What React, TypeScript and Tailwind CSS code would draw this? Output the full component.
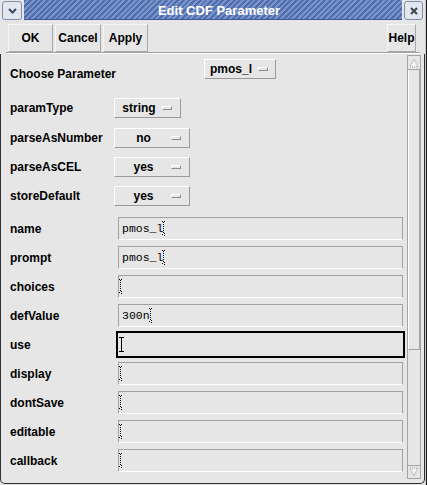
import React from 'react';

const sans = "font-['Liberation_Sans',Arial,sans-serif]";
const mono = "font-['Liberation_Mono','Courier_New',monospace]";
const labelCls = `${sans} font-bold text-[12px] leading-none text-black`;

const DotCursor = ({ after }: { after?: boolean }) => (
  <svg width="4" height="15" viewBox="0 0 4 15" className={`shrink-0 ${after ? 'ml-[-1px]' : 'ml-[-3px]'}`}>
    <g fill="#000">
      <rect x="0" y="0" width="1" height="1" />
      <rect x="2" y="0" width="1" height="1" />
      <rect x="1" y="1" width="1" height="1" />
      <rect x="1" y="3" width="1" height="1" />
      <rect x="1" y="5" width="1" height="1" />
      <rect x="1" y="7" width="1" height="1" />
      <rect x="1" y="9" width="1" height="1" />
      <rect x="1" y="11" width="1" height="1" />
      <rect x="2" y="12" width="1" height="1" />
      <rect x="0" y="13" width="1" height="1" />
      <rect x="2" y="14" width="1" height="1" />
    </g>
  </svg>
);

const SolidCursor = () => (
  <svg width="5" height="15" viewBox="0 0 5 15" className="shrink-0 ml-[-3px]">
    <path d="M0 0.5H5M2.5 0V15M0 14.5H5" stroke="#000" strokeWidth="1" />
  </svg>
);

const Dropdown = ({ text, w, pl = 7 }: { text: string; w: string; pl?: number }) => (
  <div
    className={`${w} h-[20px] flex items-center pr-[8px] bg-[#e6e6e6] border border-t-white border-l-white border-r-[#9a9a9a] border-b-[#9a9a9a] ${
      pl === 5 ? 'pl-[5px]' : 'pl-[7px]'
    }`}
  >
    <span className={`${labelCls} flex-1 text-center whitespace-nowrap`}>{text}</span>
    <span className="ml-[6px] w-[10px] h-[4px] shrink-0 border border-t-white border-l-white border-r-[#8c8c8c] border-b-[#8c8c8c]" />
  </div>
);

const Field = ({ value, focused }: { value?: string; focused?: boolean }) => (
  <div
    className={`w-[285px] h-[23px] flex items-center pl-[3px] border ${
      focused
        ? 'border-[#e6e6e6] outline-2 outline-black'
        : 'border-t-[#a2a2a2] border-l-[#a2a2a2] border-r-[#a2a2a2] border-b-white'
    }`}
  >
    {value ? <span className={`${mono} text-[11.5px] leading-none text-black whitespace-pre`}>{value}</span> : null}
    {focused ? <SolidCursor /> : <DotCursor after={!!value} />}
  </div>
);

const TopButton = ({ text, w }: { text: string; w: string }) => (
  <div
    className={`${w} h-[28px] flex items-center justify-center border border-t-[#f6f6f6] border-l-[#f6f6f6] border-r-[#a8a8a8] border-b-[#a8a8a8] ${labelCls}`}
  >
    {text}
  </div>
);

const dropRows = [
  { label: 'paramType', text: 'string', w: 'w-[67px]', mt: 'mt-[19px]' },
  { label: 'parseAsNumber', text: 'no', w: 'w-[76px]', mt: 'mt-[10px]' },
  { label: 'parseAsCEL', text: 'yes', w: 'w-[76px]', mt: 'mt-[9px]' },
  { label: 'storeDefault', text: 'yes', w: 'w-[76px]', mt: 'mt-[9px]' },
];

const fieldRows: { label: string; value?: string; focused?: boolean }[] = [
  { label: 'name', value: 'pmos_l' },
  { label: 'prompt', value: 'pmos_l' },
  { label: 'choices' },
  { label: 'defValue', value: '300n' },
  { label: 'use', focused: true },
  { label: 'display' },
  { label: 'dontSave' },
  { label: 'editable' },
  { label: 'callback' },
];

export default function App() {
  return (
    <div className="w-[427px] h-[485px] flex bg-[#1a1a1a] overflow-hidden">
      <div className="w-[425px] h-[485px] flex flex-col bg-[#e6e6e6]">
        {/* title bar */}
        <div className="h-[21px] flex items-start shrink-0">
          <div className="ml-[2px] mt-[1px] w-[20px] h-[19px] rounded-[3px] border border-[#7f8cab] bg-[#e2e6ee] flex items-center justify-center">
            <svg width="9" height="6" viewBox="0 0 9 6">
              <path d="M1 1L4.5 4.5L8 1" stroke="#3d4a68" strokeWidth="2" fill="none" />
            </svg>
          </div>
          <div className="ml-[2px] w-[378px] h-[20px] flex items-center justify-center pl-[12px] pt-[2px] border-b border-[#3c5796] bg-[repeating-linear-gradient(135deg,#4f6daf_0px,#4f6daf_2px,#7a94ca_2px,#7a94ca_4px)]">
            <span className={`${sans} font-bold text-[13px] leading-none text-white whitespace-nowrap`}>
              Edit CDF Parameter
            </span>
          </div>
          <div className="ml-[2px] mt-[1px] w-[19px] h-[19px] rounded-[3px] border border-[#7f8cab] bg-[#e2e6ee] flex items-center justify-center">
            <svg width="8" height="8" viewBox="0 0 8 8">
              <path d="M1 1L7 7M7 1L1 7" stroke="#3d4350" strokeWidth="2" />
            </svg>
          </div>
        </div>

        {/* buttons */}
        <div className="mt-[3px] h-[28px] flex pl-[8px] pr-[9px] gap-[2px] shrink-0">
          <TopButton text="OK" w="w-[45px]" />
          <TopButton text="Cancel" w="w-[46px]" />
          <TopButton text="Apply" w="w-[45px]" />
          <div className="ml-auto">
            <TopButton text="Help" w="w-[29px]" />
          </div>
        </div>
        <div className="ml-[6px] w-[414px] h-[2px] border-t border-t-[#a0a0a0] border-b border-b-white shrink-0" />

        {/* form frame */}
        <div className="h-[430px] flex border-l border-r border-b border-[#303030] rounded-b-[5px] shrink-0">
          <div className="w-[406px] flex flex-col pl-[9px]">
            <div className="mt-[5px] h-[20px] flex items-start">
              <div className={`${labelCls} w-[194px] mt-[9px] whitespace-nowrap`}>Choose Parameter</div>
              <Dropdown text="pmos_l" w="w-[72px]" pl={5} />
            </div>
            {dropRows.map((r) => (
              <div key={r.label} className={`${r.mt} h-[20px] flex items-center`}>
                <div className={`${labelCls} w-[104px] whitespace-nowrap`}>{r.label}</div>
                <Dropdown text={r.text} w={r.w} />
              </div>
            ))}
            <div className="mt-[11px] flex flex-col gap-[6px]">
              {fieldRows.map((r) => (
                <div key={r.label} className="h-[23px] flex items-center">
                  <div className={`${labelCls} w-[108px] whitespace-nowrap`}>{r.label}</div>
                  <Field value={r.value} focused={r.focused} />
                </div>
              ))}
            </div>
          </div>

          {/* scrollbar */}
          <div className="mt-[1px] w-[14px] h-[424px] border border-[#a4a4a4] flex flex-col">
            <div className="h-[14px] border-b border-[#a4a4a4] flex items-center justify-center shrink-0">
              <svg width="10" height="10" viewBox="0 0 10 10">
                <path d="M5 1L9 9H1Z" stroke="#9a9a9a" strokeWidth="1" strokeDasharray="1 1" fill="#f2f2f2" />
              </svg>
            </div>
            <div className="h-[280px] border-b border-[#a4a4a4] border-l border-l-white border-r border-r-[#a4a4a4] shrink-0" />
            <div className="flex-1" />
            <div className="h-[13px] border-t border-[#a4a4a4] flex items-center justify-center shrink-0">
              <svg width="10" height="10" viewBox="0 0 10 10">
                <path d="M1 1H9L5 9Z" stroke="#9a9a9a" strokeWidth="1" strokeDasharray="1 1" fill="#f2f2f2" />
              </svg>
            </div>
          </div>
        </div>
      </div>
      <div className="w-[1px] h-[485px] bg-[#c8c8c8]" />
    </div>
  );
}
